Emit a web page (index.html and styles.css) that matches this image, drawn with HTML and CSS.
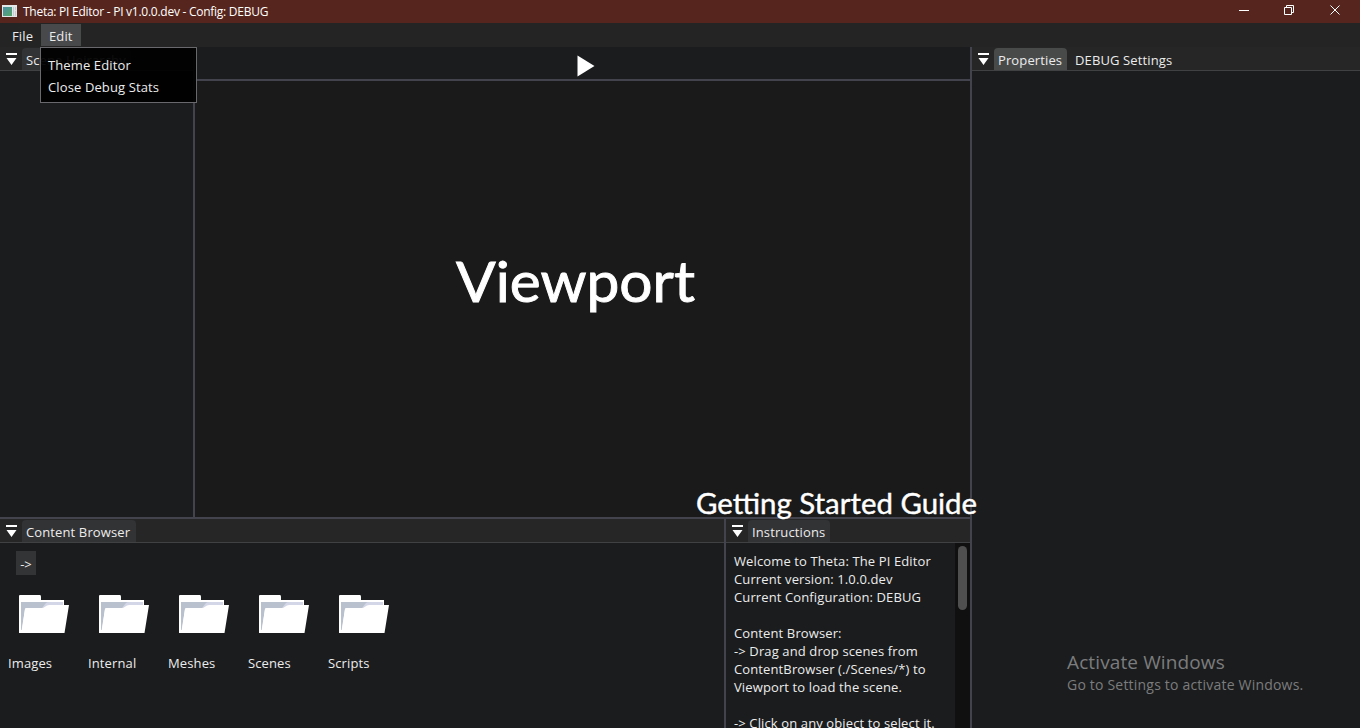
FILE: index.html
```
<!DOCTYPE html>
<html lang="en">
<head>
<meta charset="utf-8">
<title>Theta: PI Editor</title>
<link rel="stylesheet" href="styles.css">
</head>
<body>
<svg width="0" height="0" class="defs">
  <symbol id="collapse" viewBox="0 0 12 13"><path d="M0 0h11v2H0zM0.5 5h10L5.5 12z" fill="#fff"/></symbol>
  <symbol id="folder" viewBox="0 0 51 40">
    <path d="M0 1Q0 0 1 0H21Q22 0 22 2V5H45V38H0z" fill="#fff"/>
    <path d="M2 7H44V14H6L3 35H2z" fill="#b9c0ce"/>
    <path d="M23 13L27 8Q28 7 30 7H44V11H30L26 13z" fill="#d2d6e6"/>
    <path d="M2.500 36L6 14Q6 13 7 13H24L28 10.500Q29 10 30 10H50L45.500 38H2z" fill="#fff"/>
  </symbol>
</svg>
<div class="window">
  <header class="titlebar">
    <svg class="app-icon" width="16" height="14" viewBox="0 0 16 14"><defs><linearGradient id="g" x2="1" y2="1"><stop stop-color="#4e8fa8"/><stop offset="1" stop-color="#56a868"/></linearGradient></defs><path d="M0 0h15v12H0z" fill="#e4e7ea"/><path d="M1 2h9v9H1z" fill="url(#g)"/><path d="M11 2h1v9h-1zM13 2h1v3h-1zM13 6h1v5h-1z" fill="#c3cdd2"/></svg>
    <span class="title">Theta: PI Editor - PI v1.0.0.dev - Config: DEBUG</span>
    <svg class="controls" width="140" height="23" viewBox="0 0 140 23" fill="none" stroke="#fff" stroke-width="1"><path d="M19 10.500h10M64.500 7.500h7v7h-7zM66.500 7v-1.500h7v7h-2M110.500 5.500l9 9M119.500 5.500l-9 9"/></svg>
  </header>
  <nav class="menubar">
    <span class="menu-item file">File</span>
    <div class="menu-item edit active"><span>Edit</span>
      <div class="popup"><div>Theme Editor</div><div>Close Debug Stats</div></div>
    </div>
  </nav>
  <main class="workspace">
    <div class="left">
      <div class="upper">
        <section class="panel hierarchy"><div class="tabs"><svg class="collapse"><use href="#collapse"/></svg><span class="tab">Scene Heirarchy</span></div></section>
        <section class="center">
          <div class="toolbar"><svg width="18" height="22" viewBox="0 0 18 22"><path d="M0.500 0.500L17.500 11L0.500 21.500z" fill="#fff"/></svg></div>
          <div class="viewport"><span class="view-title">Viewport</span></div>
        </section>
      </div>
      <div class="lower">
        <section class="panel browser">
          <div class="tabs"><svg class="collapse"><use href="#collapse"/></svg><span class="tab cb">Content Browser</span></div>
          <button class="path">-&gt;</button>
          <div class="folders">
            <div class="folder"><svg><use href="#folder"/></svg><span>Images</span></div>
            <div class="folder"><svg><use href="#folder"/></svg><span>Internal</span></div>
            <div class="folder"><svg><use href="#folder"/></svg><span>Meshes</span></div>
            <div class="folder"><svg><use href="#folder"/></svg><span>Scenes</span></div>
            <div class="folder"><svg><use href="#folder"/></svg><span>Scripts</span></div>
          </div>
        </section>
        <section class="panel instructions">
          <div class="tabs"><svg class="collapse"><use href="#collapse"/></svg><span class="tab">Instructions</span></div>
          <div class="scroller">
            <div class="copy">Welcome to Theta: The PI Editor
Current version: 1.0.0.dev
Current Configuration: DEBUG

Content Browser:
-&gt; Drag and drop scenes from
ContentBrowser (./Scenes/*) to
Viewport to load the scene.

-&gt; Click on any object to select it.</div>
            <div class="track"><div class="thumb"></div></div>
          </div>
        </section>
      </div>
      <span class="guide">Getting Started Guide</span>
    </div>
    <section class="panel properties">
      <div class="tabs"><svg class="collapse"><use href="#collapse"/></svg><span class="tab selected">Properties</span><span class="tab plain">DEBUG Settings</span></div>
      <div class="activation"><div class="act-title">Activate Windows</div><div class="act-sub">Go to Settings to activate Windows.</div></div>
    </section>
  </main>
</div>
</body>
</html>
```
FILE: styles.css
```
* { box-sizing: border-box; }
body { margin: 0; background: #1b1c1e; color: #ececec; font: 13px/18px "Open Sans", "Noto Sans", sans-serif; letter-spacing: 0.12px; overflow: hidden; }
.defs { position: absolute; }
.window { width: 1360px; height: 728px; display: flex; flex-direction: column; overflow: hidden; white-space: nowrap; }
.titlebar { height: 23px; background: #56251d; display: flex; flex: none; padding-left: 2px; color: #fff; }
.app-icon { margin-top: 5px; }
.title { margin-left: 5px; font: 12px/23px "Open Sans", sans-serif; letter-spacing: -0.26px; }
.controls { margin-left: auto; }
.menubar { height: 24px; flex: none; background: #242424; display: flex; padding: 1px 0 0 4px; }
.menu-item { height: 22px; line-height: 24px; padding: 0 8px; }
.file { width: 37px; }
.edit { width: 40px; position: relative; }
.active { background: #48494b; }
.popup { position: absolute; z-index: 5; left: -1px; top: 23px; width: 157px; height: 56px; border: 1px solid #68686d; background: rgba(0, 0, 0, 0.94); padding: 6px 7px; line-height: 22px; }
.workspace { flex: 1; min-height: 0; display: flex; }
.left { position: relative; width: 972px; display: flex; flex-direction: column; border-right: 2px solid #43434d; }
.upper { height: 472px; flex: none; display: flex; border-bottom: 2px solid #43434d; }
.hierarchy { width: 195px; border-right: 2px solid #43434d; }
.center { flex: 1; display: flex; flex-direction: column; }
.toolbar { height: 34px; border-bottom: 2px solid #43434d; padding: 8px 0 0 382px; }
.toolbar svg { display: block; }
.viewport { flex: 1; background: #1a1a1a; padding: 155px 0 0 261px; }
.view-title { display: inline-block; font: 56px/90px Lato, sans-serif; letter-spacing: 0; color: #fff; transform: scaleX(1.047); transform-origin: 0 50%; -webkit-text-stroke: 0.9px #fff; }
.lower { flex: 1; min-height: 0; display: flex; }
.browser { width: 726px; border-right: 2px solid #43434d; }
.tabs { display: flex; height: 24px; background: #262626; border-bottom: 1px solid #404143; padding: 1px 0 0 6px; }
.collapse { width: 12px; height: 13px; margin: 5px 4px 0 0; }
.tab { height: 22px; padding: 0 5px 0 4px; border-radius: 4px 4px 0 0; background: #323335; line-height: 24px; }
.cb { width: 114px; }
.selected { background: #484a4a; width: 73px; }
.plain { background: none; margin-left: 4px; }
.path { display: block; margin: 8px 0 0 16px; width: 20px; height: 24px; border: 0; padding: 2px 0 0; background: #333436; color: #ececec; font: 13px/22px "Open Sans", sans-serif; }
.folders { display: flex; padding: 20px 0 0 8px; }
.folder { width: 80px; }
.folder svg { display: block; width: 51px; height: 40px; margin: 0 0 19px 11px; }
.instructions { flex: 1; display: flex; flex-direction: column; min-width: 0; }
.instructions .tabs { flex: none; }
.scroller { display: flex; flex: 1; min-height: 0; overflow: hidden; }
.copy { flex: 1; padding: 9px 0 0 8px; white-space: pre; }
.track { width: 15px; background: #101010; padding: 3px; }
.thumb { width: 9px; height: 64px; border-radius: 5px; background: #4f4f4f; }
.guide { position: absolute; z-index: 3; left: 696px; top: 436px; color: #fff; font: 28px/40px Lato, sans-serif; letter-spacing: 0; transform: scaleX(1.05); transform-origin: 0 50%; -webkit-text-stroke: 0.4px #fff; }
.properties { flex: 1; display: flex; flex-direction: column; }
.activation { margin: auto 0 33px 95px; color: #7b7c7d; }
.act-title { font: 19px/26px "Open Sans", sans-serif; }
.act-sub { font: 14px/20px "Open Sans", sans-serif; letter-spacing: 0.2px; }
```
